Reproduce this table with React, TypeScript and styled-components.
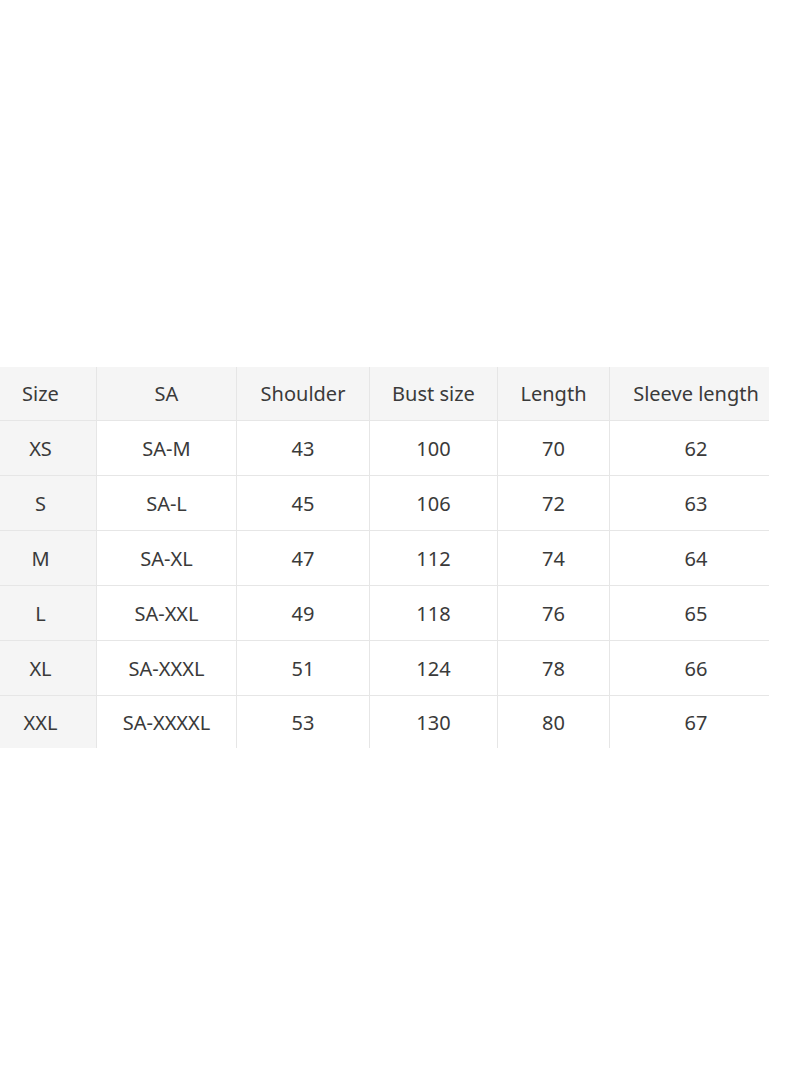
import React from "react";
import styled, { createGlobalStyle } from "styled-components";

const Global = createGlobalStyle`
  html, body { margin: 0; padding: 0; background: #ffffff; }
  body { font-family: "Noto Sans", "Open Sans", sans-serif; }
`;

const Page = styled.div`
  width: 800px;
  height: 1091px;
  padding-top: 367px;
  box-sizing: border-box;
  background: #ffffff;
`;

const Table = styled.div`
  display: grid;
  grid-template-columns: 97px 140px 133px 128px 112px 159px;
  grid-template-rows: 54px repeat(5, 55px) 52px;
  width: 769px;
`;

const Cell = styled.div<{ $head?: boolean; $first?: boolean; $lastCol?: boolean; $lastRow?: boolean }>`
  display: flex;
  align-items: center;
  justify-content: center;
  box-sizing: border-box;
  font-size: 20px;
  color: #3a3a3a;
  padding-right: ${(p) => (p.$first ? "15px" : "0")};
  padding-left: ${(p) => (p.$lastCol ? "13px" : "0")};
  background: ${(p) => (p.$head || p.$first ? "#f5f5f5" : "#ffffff")};
  border-right: ${(p) => (p.$lastCol ? "none" : "1px solid #e6e6e6")};
  border-bottom: ${(p) => (p.$lastRow ? "none" : "1px solid #e6e6e6")};
  white-space: nowrap;
  overflow: hidden;
`;

const headers = ["Size", "SA", "Shoulder", "Bust size", "Length", "Sleeve length"];
const rows = [
  ["XS", "SA-M", "43", "100", "70", "62"],
  ["S", "SA-L", "45", "106", "72", "63"],
  ["M", "SA-XL", "47", "112", "74", "64"],
  ["L", "SA-XXL", "49", "118", "76", "65"],
  ["XL", "SA-XXXL", "51", "124", "78", "66"],
  ["XXL", "SA-XXXXL", "53", "130", "80", "67"],
];

export default function App() {
  return (
    <>
      <Global />
      <Page>
        <Table>
          {headers.map((h, i) => (
            <Cell key={h} $head $first={i === 0} $lastCol={i === headers.length - 1}>
              {h}
            </Cell>
          ))}
          {rows.map((r, ri) =>
            r.map((c, ci) => (
              <Cell
                key={`${ri}-${ci}`}
                $first={ci === 0}
                $lastCol={ci === r.length - 1}
                $lastRow={ri === rows.length - 1}
              >
                {c}
              </Cell>
            ))
          )}
        </Table>
      </Page>
    </>
  );
}
